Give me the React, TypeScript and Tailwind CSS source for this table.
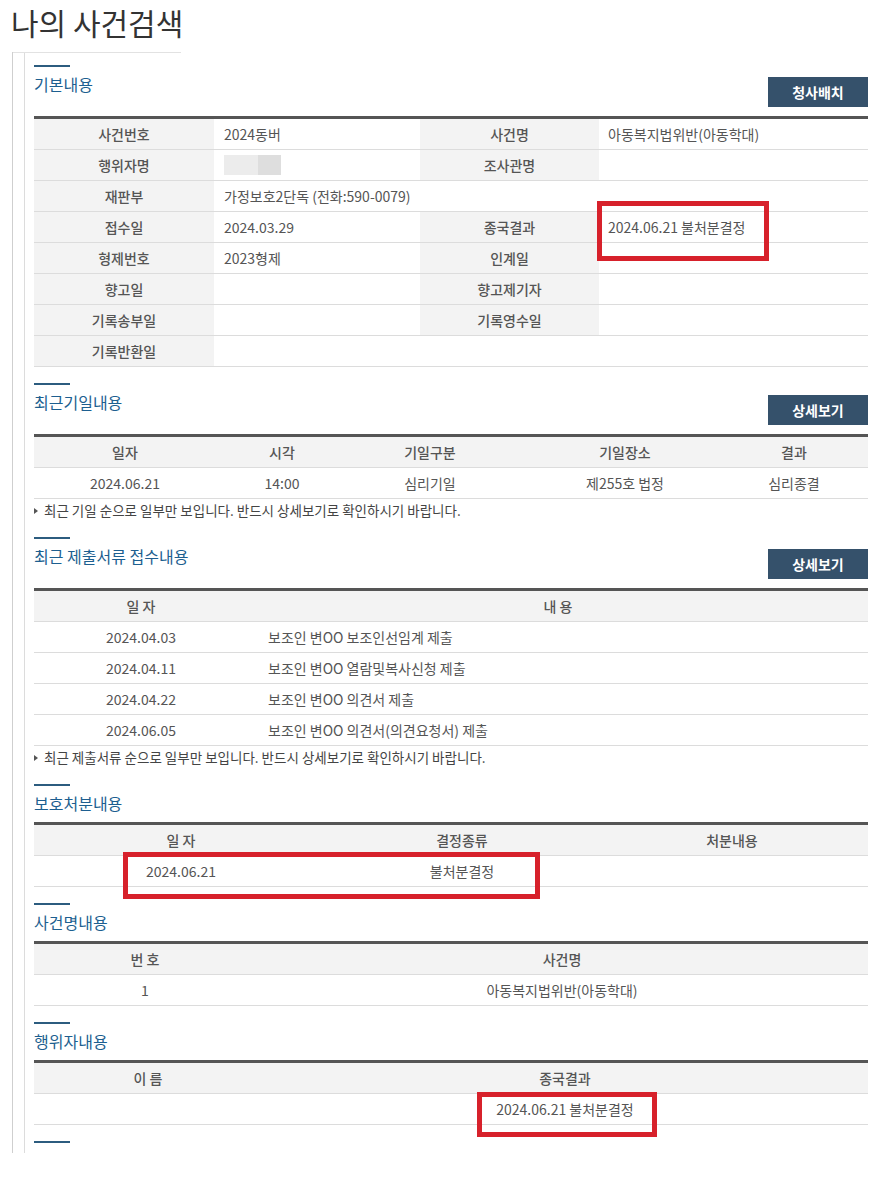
import React from 'react';

const FONT = "font-['Noto_Sans_CJK_KR','Noto_Sans',sans-serif]";

const SectionHead: React.FC<{ title: string; button?: string }> = ({ title, button }) => (
  <div className="pb-[9px]">
    <div className="w-[36px] h-[2px] bg-[#2c5c7f]" />
    <div className="flex items-start justify-between">
      <h3 className="mt-[7px] text-[16px] leading-[20px] text-[#1d5f90]">{title}</h3>
      {button && (
        <button className="mt-[10px] h-[30px] w-[100px] bg-[#35516b] text-white text-[14px] font-bold leading-[30px]">
          {button}
        </button>
      )}
    </div>
  </div>
);

const Note: React.FC<{ text: string }> = ({ text }) => (
  <div className="flex items-center h-[22px] text-[13.5px] text-[#444]">
    <span className="mt-[1px] mr-[6px] w-0 h-0 border-y-[3px] border-y-transparent border-l-[4px] border-l-[#555]" />
    <span>{text}</span>
  </div>
);

const RedBox: React.FC<{ className: string }> = ({ className }) => (
  <div className={`absolute border-[5px] border-[#d7212b] pointer-events-none ${className}`} />
);

const info: [string, React.ReactNode, string?, React.ReactNode?][] = [
  ['사건번호', '2024동버', '사건명', '아동복지법위반(아동학대)'],
  [
    '행위자명',
    <span className="flex h-[20px]">
      <span className="w-[34px] bg-[#ececec]" />
      <span className="w-[23px] bg-[#dedede]" />
    </span>,
    '조사관명',
    '',
  ],
  ['재판부', '가정보호2단독 (전화:590-0079)'],
  ['접수일', '2024.03.29', '종국결과', '2024.06.21 불처분결정'],
  ['형제번호', '2023형제', '인계일', ''],
  ['향고일', '', '향고제기자', ''],
  ['기록송부일', '', '기록영수일', ''],
  ['기록반환일', ''],
];

const labelCls = 'flex items-center justify-center bg-[#f3f3f3] font-medium text-[#555]';
const headRow = 'grid h-[31px] bg-[#f3f3f3] border-b border-[#dcdcdc] font-medium text-[#555]';
const bodyRow = 'grid h-[31px] border-b border-[#dcdcdc] text-[#555]';

export default function App() {
  return (
    <div className={`w-[876px] min-h-[1180px] bg-white ${FONT}`}>
      <h1 className="h-[52px] pl-[11px] text-[30px] leading-[44px] text-[#333]">나의 사건검색</h1>

      <div className="ml-[12px] w-[856px] border-l border-[#cfcfcf]">
        <div className="w-[168px] border-t border-[#e2e2e2]" />
        <div className="ml-[11px] border-l border-[#dcdcdc] pl-[9px] pt-[12px] pb-[10px] text-[14px]">
          {/* 기본내용 */}
          <SectionHead title="기본내용" button="청사배치" />
          <div className="relative border-t-[3px] border-[#555]">
            {info.map(([l1, v1, l2, v2], i) => (
              <div key={i} className={`${bodyRow} ${l2 !== undefined ? 'grid-cols-[180px_206px_179px_1fr]' : 'grid-cols-[180px_1fr]'}`}>
                <div className={labelCls}>{l1}</div>
                <div className="flex items-center pl-[10px]">{v1}</div>
                {l2 !== undefined && <div className={labelCls}>{l2}</div>}
                {l2 !== undefined && <div className="flex items-center pl-[9px]">{v2}</div>}
              </div>
            ))}
            <RedBox className="left-[563px] top-[82px] w-[172px] h-[60px]" />
          </div>

          {/* 최근기일내용 */}
          <div className="mt-[16px]">
            <SectionHead title="최근기일내용" button="상세보기" />
            <div className="border-t-[3px] border-[#555] text-center">
              <div className={`${headRow} grid-cols-[182px_132px_164px_226px_1fr] items-center`}>
                <div>일자</div>
                <div>시각</div>
                <div>기일구분</div>
                <div>기일장소</div>
                <div className="pr-[18px]">결과</div>
              </div>
              <div className={`${bodyRow} grid-cols-[182px_132px_164px_226px_1fr] items-center`}>
                <div>2024.06.21</div>
                <div>14:00</div>
                <div>심리기일</div>
                <div>제255호 법정</div>
                <div className="pr-[18px]">심리종결</div>
              </div>
            </div>
            <Note text="최근 기일 순으로 일부만 보입니다. 반드시 상세보기로 확인하시기 바랍니다." />
          </div>

          {/* 최근 제출서류 접수내용 */}
          <div className="mt-[16px]">
            <SectionHead title="최근 제출서류 접수내용" button="상세보기" />
            <div className="border-t-[3px] border-[#555]">
              <div className={`${headRow} grid-cols-[214px_1fr] items-center text-center`}>
                <div>일 자</div>
                <div>내 용</div>
              </div>
              {[
                ['2024.04.03', '보조인 변OO 보조인선임계 제출'],
                ['2024.04.11', '보조인 변OO 열람및복사신청 제출'],
                ['2024.04.22', '보조인 변OO 의견서 제출'],
                ['2024.06.05', '보조인 변OO 의견서(의견요청서) 제출'],
              ].map(([d, c]) => (
                <div key={d} className={`${bodyRow} grid-cols-[214px_1fr] items-center`}>
                  <div className="text-center">{d}</div>
                  <div className="pl-[20px]">{c}</div>
                </div>
              ))}
            </div>
            <Note text="최근 제출서류 순으로 일부만 보입니다. 반드시 상세보기로 확인하시기 바랍니다." />
          </div>

          {/* 보호처분내용 */}
          <div className="mt-[16px]">
            <SectionHead title="보호처분내용" />
            <div className="relative border-t-[3px] border-[#555] text-center">
              <div className={`${headRow} grid-cols-[294px_268px_1fr] items-center`}>
                <div>일 자</div>
                <div>결정종류</div>
                <div>처분내용</div>
              </div>
              <div className={`${bodyRow} grid-cols-[294px_268px_1fr] items-center`}>
                <div>2024.06.21</div>
                <div>불처분결정</div>
                <div />
              </div>
              <RedBox className="left-[89px] top-[27px] w-[417px] h-[47px]" />
            </div>
          </div>

          {/* 사건명내용 */}
          <div className="mt-[16px]">
            <SectionHead title="사건명내용" />
            <div className="border-t-[3px] border-[#555] text-center">
              <div className={`${headRow} grid-cols-[222px_1fr] items-center`}>
                <div>번 호</div>
                <div>사건명</div>
              </div>
              <div className={`${bodyRow} grid-cols-[222px_1fr] items-center`}>
                <div>1</div>
                <div>아동복지법위반(아동학대)</div>
              </div>
            </div>
          </div>

          {/* 행위자내용 */}
          <div className="mt-[16px]">
            <SectionHead title="행위자내용" />
            <div className="relative border-t-[3px] border-[#555] text-center">
              <div className={`${headRow} grid-cols-[228px_1fr] items-center`}>
                <div>이 름</div>
                <div>종국결과</div>
              </div>
              <div className={`${bodyRow} grid-cols-[228px_1fr] items-center`}>
                <div />
                <div>2024.06.21 불처분결정</div>
              </div>
              <RedBox className="left-[443px] top-[29px] w-[180px] h-[45px]" />
            </div>
          </div>

          <div className="mt-[16px] w-[36px] h-[2px] bg-[#2c5c7f]" />
        </div>
      </div>
    </div>
  );
}
